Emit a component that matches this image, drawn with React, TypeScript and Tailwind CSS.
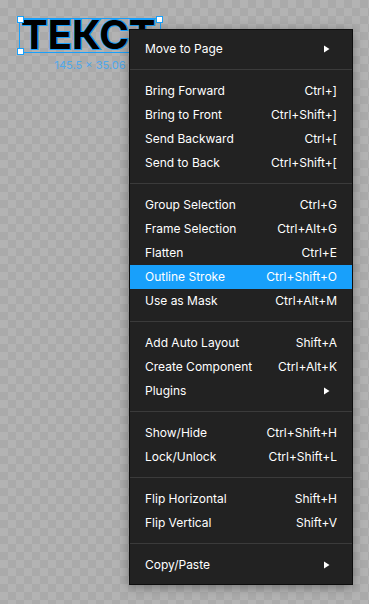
import React from "react";

type Item = { label: string; shortcut?: string; submenu?: boolean; active?: boolean };

const groups: Item[][] = [
  [{ label: "Move to Page", submenu: true }],
  [
    { label: "Bring Forward", shortcut: "Ctrl+]" },
    { label: "Bring to Front", shortcut: "Ctrl+Shift+]" },
    { label: "Send Backward", shortcut: "Ctrl+[" },
    { label: "Send to Back", shortcut: "Ctrl+Shift+[" },
  ],
  [
    { label: "Group Selection", shortcut: "Ctrl+G" },
    { label: "Frame Selection", shortcut: "Ctrl+Alt+G" },
    { label: "Flatten", shortcut: "Ctrl+E" },
    { label: "Outline Stroke", shortcut: "Ctrl+Shift+O", active: true },
    { label: "Use as Mask", shortcut: "Ctrl+Alt+M" },
  ],
  [
    { label: "Add Auto Layout", shortcut: "Shift+A" },
    { label: "Create Component", shortcut: "Ctrl+Alt+K" },
    { label: "Plugins", submenu: true },
  ],
  [
    { label: "Show/Hide", shortcut: "Ctrl+Shift+H" },
    { label: "Lock/Unlock", shortcut: "Ctrl+Shift+L" },
  ],
  [
    { label: "Flip Horizontal", shortcut: "Shift+H" },
    { label: "Flip Vertical", shortcut: "Shift+V" },
  ],
  [{ label: "Copy/Paste", submenu: true }],
];

const Arrow = () => (
  <svg width="6" height="8" viewBox="0 0 6 8" className="mr-[7px]">
    <path d="M0 0.5 L5.5 4 L0 7.5 Z" fill="#ffffff" />
  </svg>
);

const MenuRow: React.FC<{ item: Item }> = ({ item }) => (
  <div
    className={`flex h-6 items-center justify-between px-[15px] ${
      item.active ? "bg-[#18a0fb]" : ""
    }`}
  >
    <span>{item.label}</span>
    {item.submenu ? <Arrow /> : <span>{item.shortcut}</span>}
  </div>
);

const Handle = ({ className }: { className: string }) => (
  <div className={`absolute h-[7px] w-[7px] border border-[#18a0fb] bg-white ${className}`} />
);

export default function App() {
  return (
    <div className="relative h-[604px] w-[369px] overflow-hidden bg-[#b3b3b3] bg-[conic-gradient(#aaaaaa_25%,#b3b3b3_0_50%,#aaaaaa_0_75%,#b3b3b3_0)] bg-[length:16px_16px] font-['Inter','Liberation_Sans',sans-serif]">
      {/* selected text layer on the canvas */}
      <div className="absolute left-[19px] top-[18px] flex w-[142px] flex-col items-center">
        <div className="relative h-[35px] w-full border border-[#18a0fb]">
          <div className="-mt-[4px] pl-[1px] text-[40px] font-bold leading-[40px] text-black [-webkit-text-stroke:2px_#18a0fb] [paint-order:stroke_fill]">
            ТЕКСТ
          </div>
          <Handle className="-left-[3px] -top-[3px]" />
          <Handle className="-right-[3px] -top-[3px]" />
          <Handle className="-bottom-[3px] -left-[3px]" />
        </div>
        <div className="mt-[5px] text-[11px] leading-[14px] text-[#4fa8ea]">145.5 × 35.06</div>
      </div>

      {/* context menu */}
      <div className="absolute left-[129px] top-[29px] w-[224px] border border-[#0d0d0d] bg-[#222222] pt-[7px] pb-[7px] text-[12px] text-white shadow-[0_2px_10px_rgba(0,0,0,0.35)]">
        {groups.map((group, gi) => (
          <div key={gi}>
            {gi > 0 && <div className="mt-[8px] mb-[9px] h-px bg-[#3b3b3b]" />}
            {group.map((item) => (
              <MenuRow key={item.label} item={item} />
            ))}
          </div>
        ))}
      </div>
    </div>
  );
}
